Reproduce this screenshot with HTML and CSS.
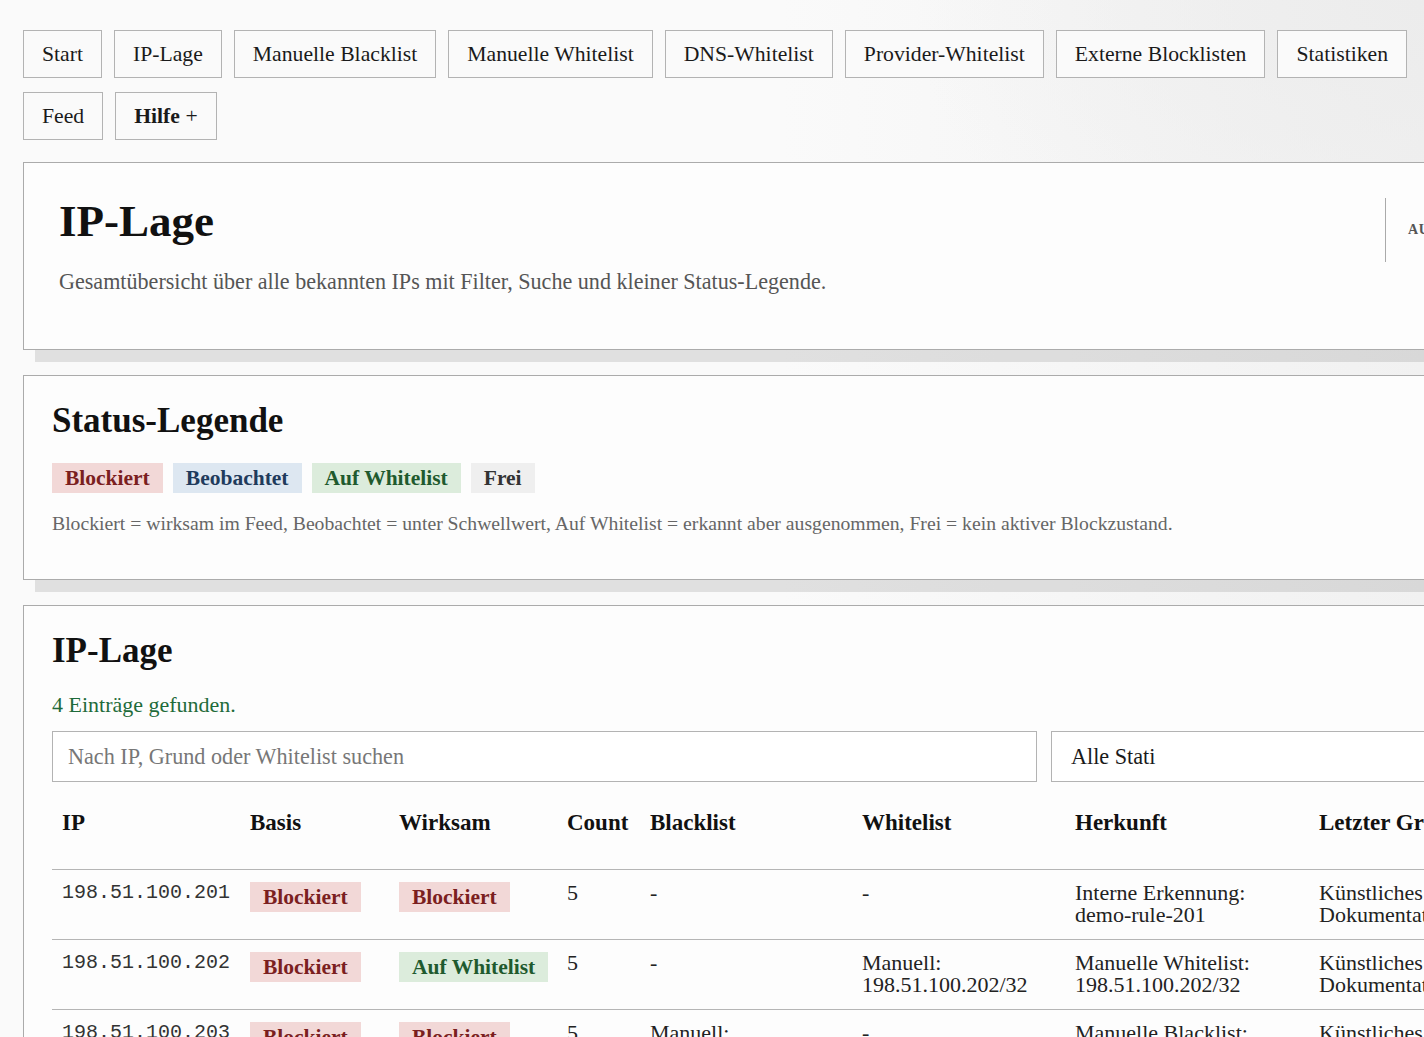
FILE: index.html
```html
<!DOCTYPE html>
<html lang="de">
<head>
    <meta charset="UTF-8">
    <meta name="viewport" content="width=device-width, initial-scale=1.0">
    <title>IP-Lage</title>
    <link rel="stylesheet" href="styles.css">
</head>
<body>

    <nav class="nav">
        <a class="nav-link" href="#">Start</a>
        <a class="nav-link" href="#">IP-Lage</a>
        <a class="nav-link" href="#">Manuelle Blacklist</a>
        <a class="nav-link" href="#">Manuelle Whitelist</a>
        <a class="nav-link" href="#">DNS-Whitelist</a>
        <a class="nav-link" href="#">Provider-Whitelist</a>
        <a class="nav-link" href="#">Externe Blocklisten</a>
        <a class="nav-link" href="#">Statistiken</a>
        <a class="nav-link" href="#">Feed</a>
        <a class="nav-link" href="#"><b>Hilfe</b> +</a>
    </nav>

    <main class="page">
        <section class="card hero">
            <div class="hero-text">
                <h1>IP-Lage</h1>
                <p class="muted">Gesamtübersicht über alle bekannten IPs mit Filter, Suche und kleiner Status-Legende.</p>
            </div>
            <aside class="hero-aside">
                <span class="aside-label">AUTOMATISCH AKTUALISIERT</span>
            </aside>
        </section>

        <section class="card">
            <h2>Status-Legende</h2>
            <div class="badges">
                <span class="badge badge-red">Blockiert</span>
                <span class="badge badge-blue">Beobachtet</span>
                <span class="badge badge-green">Auf Whitelist</span>
                <span class="badge badge-gray">Frei</span>
            </div>
            <p class="legend-text">Blockiert = wirksam im Feed, Beobachtet = unter Schwellwert, Auf Whitelist = erkannt aber ausgenommen, Frei = kein aktiver Blockzustand.</p>
        </section>

        <section class="card">
            <h2>IP-Lage</h2>
            <p class="found">4 Einträge gefunden.</p>

            <div class="filters">
                <input type="text" class="field" placeholder="Nach IP, Grund oder Whitelist suchen">
                <select class="field">
                    <option>Alle Stati</option>
                    <option>Blockiert</option>
                    <option>Beobachtet</option>
                    <option>Auf Whitelist</option>
                    <option>Frei</option>
                </select>
            </div>

            <table class="ip-table">
                <colgroup>
                    <col style="width: 188px">
                    <col style="width: 149px">
                    <col style="width: 168px">
                    <col style="width: 83px">
                    <col style="width: 212px">
                    <col style="width: 213px">
                    <col style="width: 244px">
                    <col style="width: 280px">
                    <col>
                </colgroup>
                <thead>
                    <tr>
                        <th>IP</th>
                        <th>Basis</th>
                        <th>Wirksam</th>
                        <th>Count</th>
                        <th>Blacklist</th>
                        <th>Whitelist</th>
                        <th>Herkunft</th>
                        <th>Letzter Grund</th>
                        <th>Zuletzt gesehen</th>
                    </tr>
                </thead>
                <tbody>
                    <tr>
                        <td class="ip">198.51.100.201</td>
                        <td><span class="badge badge-red">Blockiert</span></td>
                        <td><span class="badge badge-red">Blockiert</span></td>
                        <td>5</td>
                        <td>-</td>
                        <td>-</td>
                        <td>Interne Erkennung: demo-rule-201</td>
                        <td>Künstliches Dokumentationsbeispiel</td>
                        <td>2024-05-12 08:14</td>
                    </tr>
                    <tr>
                        <td class="ip">198.51.100.202</td>
                        <td><span class="badge badge-red">Blockiert</span></td>
                        <td><span class="badge badge-green">Auf Whitelist</span></td>
                        <td>5</td>
                        <td>-</td>
                        <td>Manuell: 198.51.100.202/32</td>
                        <td>Manuelle Whitelist: 198.51.100.202/32</td>
                        <td>Künstliches Dokumentationsbeispiel</td>
                        <td>2024-05-12 08:16</td>
                    </tr>
                    <tr>
                        <td class="ip">198.51.100.203</td>
                        <td><span class="badge badge-red">Blockiert</span></td>
                        <td><span class="badge badge-red">Blockiert</span></td>
                        <td>5</td>
                        <td>Manuell: 198.51.100.203/32</td>
                        <td>-</td>
                        <td>Manuelle Blacklist: 198.51.100.203/32</td>
                        <td>Künstliches Dokumentationsbeispiel</td>
                        <td>2024-05-12 08:19</td>
                    </tr>
                    <tr>
                        <td class="ip">198.51.100.204</td>
                        <td><span class="badge badge-blue">Beobachtet</span></td>
                        <td><span class="badge badge-blue">Beobachtet</span></td>
                        <td>2</td>
                        <td>-</td>
                        <td>-</td>
                        <td>Interne Erkennung: demo-rule-204</td>
                        <td>Künstliches Dokumentationsbeispiel</td>
                        <td>2024-05-12 08:21</td>
                    </tr>
                </tbody>
            </table>
        </section>
    </main>

</body>
</html>
```

FILE: styles.css
```css
body {
    font-family: "Liberation Serif", "DejaVu Serif", serif;
    background:
        radial-gradient(ellipse 600px 420px at 100% 0%, #ececec, rgba(250, 250, 250, 0) 85%),
        linear-gradient(to right, #fafafa 55%, #f1f1f1);
    background-color: #fafafa;
    color: #1a1a1a;
    margin: 0;
    padding: 30px 23px 40px;
}
.nav {
    display: flex;
    flex-wrap: wrap;
    gap: 14px 12px;
    width: 1420px;
}
.nav-link {
    display: inline-block;
    padding: 11px 18px;
    line-height: 24px;
    border: 1px solid #b3b3b3;
    background: #fafafa;
    color: #1a1a1a;
    font-size: 21.7px;
    text-decoration: none;
}
.page {
    width: 1800px;
    margin-top: 22px;
}
.card {
    box-sizing: border-box;
    background: #fdfdfd;
    border: 1px solid #ababab;
    box-shadow: 12px 12px 0 rgba(0, 0, 0, 0.1);
    padding: 25px 28px 28px;
    margin-bottom: 25px;
}
.hero {
    display: flex;
    justify-content: space-between;
    align-items: flex-start;
    padding: 32px 35px 55px;
}
h1 {
    font-size: 45px;
    line-height: 52px;
    margin: 0 0 23px;
    color: #111;
}
h2 {
    font-size: 35px;
    line-height: 40px;
    margin: 0 0 22px;
    color: #111;
}
.muted {
    margin: 0;
    font-size: 22.1px;
    line-height: 24px;
    color: #555;
}
.hero-aside {
    box-sizing: border-box;
    border-left: 1px solid #aaa;
    height: 64px;
    margin-top: 3px;
    padding-left: 22px;
    width: 402px;
    display: flex;
    align-items: center;
}
.aside-label {
    font-size: 14px;
    font-weight: bold;
    letter-spacing: 0.04em;
    color: #555;
    white-space: nowrap;
}
.badges {
    display: flex;
    gap: 10px;
    margin-bottom: 18px;
}
.badge {
    display: inline-block;
    padding: 4px 13px;
    font-size: 21.5px;
    line-height: 22px;
    font-weight: bold;
    white-space: nowrap;
}
.badge-red {
    background: #f2d8d7;
    color: #7b1f1f;
}
.badge-blue {
    background: #dde7f1;
    color: #1f3b5c;
}
.badge-green {
    background: #dcecdc;
    color: #1f5a2e;
}
.badge-gray {
    background: #efefef;
    color: #333;
}
.legend-text {
    margin: 0 0 16px;
    font-size: 19.7px;
    line-height: 24px;
    color: #666;
}
.found {
    color: #1f6b3a;
    font-size: 22px;
    line-height: 24px;
    margin: 0 0 14px;
}
.filters {
    display: grid;
    grid-template-columns: 985px 1fr;
    gap: 14px;
}
.field {
    font-family: inherit;
    font-size: 22.2px;
    padding: 0 15px;
    border: 1px solid #b3b3b3;
    background: #fff;
    color: #1a1a1a;
    border-radius: 0;
    height: 51px;
    box-sizing: border-box;
}
select.field {
    appearance: none;
    padding-left: 19px;
}
.field::placeholder {
    color: #777;
}
.ip-table {
    width: 100%;
    table-layout: fixed;
    border-collapse: collapse;
    margin-top: 15px;
}
.ip-table th {
    text-align: left;
    font-size: 23px;
    line-height: 24px;
    padding: 14px 10px 34px;
    border-bottom: 1px solid #b5b5b5;
    color: #111;
    white-space: nowrap;
}
.ip-table td {
    vertical-align: top;
    font-size: 22px;
    line-height: 22px;
    padding: 12px 10px 12px;
    border-bottom: 1px solid #b5b5b5;
    color: #222;
    height: 45px;
}
.ip-table td .badge {
    vertical-align: top;
}
.ip {
    font-family: "Liberation Mono", "DejaVu Sans Mono", monospace;
    font-size: 20px !important;
    color: #333 !important;
}
```
